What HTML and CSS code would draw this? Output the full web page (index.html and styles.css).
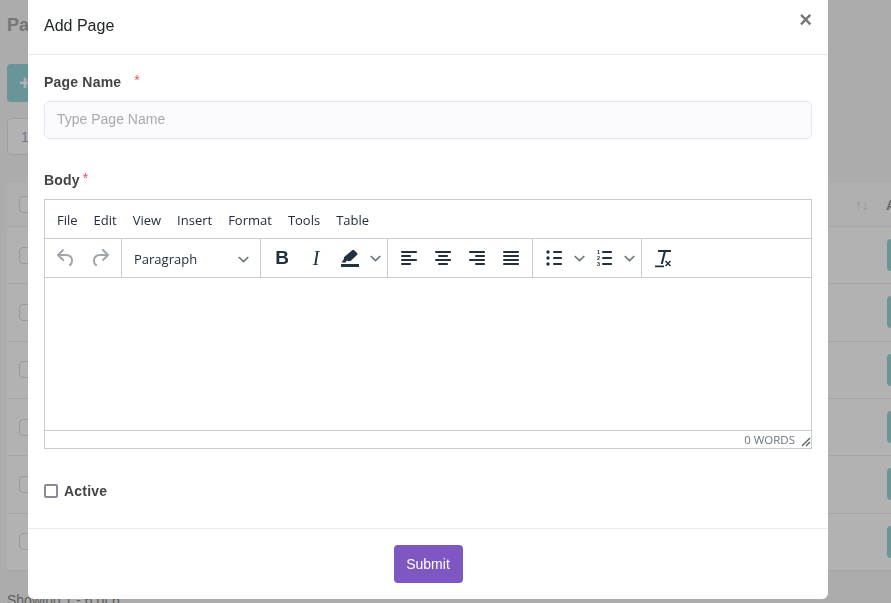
FILE: index.html
```html
<!DOCTYPE html>
<html lang="en">
<head>
    <meta charset="UTF-8">
    <meta name="viewport" content="width=device-width, initial-scale=1.0">
    <title>Add Page</title>
    <link rel="stylesheet" href="styles.css">
</head>
<body>
    <!-- page behind the dialog -->
    <div class="page">
        <h1 class="page-title">Pa</h1>
        <button class="add-btn">+</button>
        <div class="length-box">1</div>
        <div class="table-card">
            <div class="table-head"><span class="check"></span><span class="sort">↑↓</span><span class="head-action">A</span></div>
            <div class="table-row"><span class="check"></span><span class="row-btn"></span></div>
            <div class="table-row"><span class="check"></span><span class="row-btn"></span></div>
            <div class="table-row"><span class="check"></span><span class="row-btn"></span></div>
            <div class="table-row"><span class="check"></span><span class="row-btn"></span></div>
            <div class="table-row"><span class="check"></span><span class="row-btn"></span></div>
            <div class="table-row"><span class="check"></span><span class="row-btn"></span></div>
        </div>
        <p class="showing">Showing 1 - 6 of 6</p>
    </div>
    <div class="backdrop"></div>

    <div class="modal">
        <div class="modal-header">
            <h2 class="modal-title">Add Page</h2>
            <span class="modal-close">×</span>
        </div>
        <form class="modal-body">
            <label class="field-label name-label" for="pageName">Page Name<span class="req req-gap">*</span></label>
            <input class="text-input" type="text" id="pageName" placeholder="Type Page Name">

            <div class="field-label body-label">Body<span class="req">*</span></div>
            <div class="editor">
                <div class="menubar">
                    <span class="menu-item">File</span>
                    <span class="menu-item">Edit</span>
                    <span class="menu-item">View</span>
                    <span class="menu-item">Insert</span>
                    <span class="menu-item">Format</span>
                    <span class="menu-item">Tools</span>
                    <span class="menu-item">Table</span>
                </div>
                <div class="toolbar">
                    <div class="tool-group">
                        <span class="tool disabled"><svg width="24" height="24" viewBox="0 0 24 24"><path d="M6.4 8H12c3.7 0 6.2 2 6.8 5.1.6 2.7-.4 5.6-2.3 6.8a1 1 0 0 1-1-1.8c1.1-.6 1.8-2.7 1.4-4.6-.5-2.1-2.1-3.5-4.9-3.5H6.4l3.3 3.3a1 1 0 1 1-1.4 1.4l-5-5a1 1 0 0 1 0-1.4l5-5a1 1 0 0 1 1.4 1.4L6.4 8z"/></svg></span>
                        <span class="tool disabled"><svg width="24" height="24" viewBox="0 0 24 24"><path d="M17.6 10H12c-2.8 0-4.4 1.4-4.9 3.5-.4 2 .3 4 1.4 4.6a1 1 0 1 1-1 1.8c-2-1.2-2.9-4.1-2.3-6.8.6-3 3-5.1 6.8-5.1h5.6l-3.3-3.3a1 1 0 1 1 1.4-1.4l5 5a1 1 0 0 1 0 1.4l-5 5a1 1 0 0 1-1.4-1.4l3.3-3.3z"/></svg></span>
                    </div>
                    <div class="tool-group">
                        <span class="format-select">Paragraph
                            <svg class="chev" width="11" height="7" viewBox="0 0 11 7"><path d="M.7 1l4.800 4.600L10.300 1" fill="none" stroke-width="1.7"/></svg>
                        </span>
                    </div>
                    <div class="tool-group">
                        <span class="tool tool-bold">B</span>
                        <span class="tool tool-italic">I</span>
                        <span class="tool"><svg width="24" height="24" viewBox="0 0 24 24"><path d="M3 18h18v3H3z"/><path d="M3.500 16.500l2.300-3.300.2-2L14.200 4.300a1.500 1.500 0 0 1 2 0l2.800 2.700a1.500 1.500 0 0 1 0 2.100l-6.500 6-2.300.2-1.300-1-1.200 2.200z"/></svg></span>
                        <span class="tool-arrow"><svg class="chev" width="11" height="7" viewBox="0 0 11 7"><path d="M.7 1l4.800 4.600L10.300 1" fill="none" stroke-width="1.7"/></svg></span>
                    </div>
                    <div class="tool-group">
                        <span class="tool"><svg width="24" height="24" viewBox="0 0 24 24"><path d="M5 5h14c.6 0 1 .4 1 1s-.4 1-1 1H5a1 1 0 1 1 0-2zm0 4h8c.6 0 1 .4 1 1s-.4 1-1 1H5a1 1 0 1 1 0-2zm0 8h8c.6 0 1 .4 1 1s-.4 1-1 1H5a1 1 0 0 1 0-2zm0-4h14c.6 0 1 .4 1 1s-.4 1-1 1H5a1 1 0 0 1 0-2z"/></svg></span>
                        <span class="tool"><svg width="24" height="24" viewBox="0 0 24 24"><path d="M5 5h14c.6 0 1 .4 1 1s-.4 1-1 1H5a1 1 0 1 1 0-2zm3 4h8c.6 0 1 .4 1 1s-.4 1-1 1H8a1 1 0 1 1 0-2zm0 8h8c.6 0 1 .4 1 1s-.4 1-1 1H8a1 1 0 0 1 0-2zm-3-4h14c.6 0 1 .4 1 1s-.4 1-1 1H5a1 1 0 0 1 0-2z"/></svg></span>
                        <span class="tool"><svg width="24" height="24" viewBox="0 0 24 24"><path d="M5 5h14c.6 0 1 .4 1 1s-.4 1-1 1H5a1 1 0 1 1 0-2zm6 4h8c.6 0 1 .4 1 1s-.4 1-1 1h-8a1 1 0 0 1 0-2zm0 8h8c.6 0 1 .4 1 1s-.4 1-1 1h-8a1 1 0 0 1 0-2zm-6-4h14c.6 0 1 .4 1 1s-.4 1-1 1H5a1 1 0 0 1 0-2z"/></svg></span>
                        <span class="tool"><svg width="24" height="24" viewBox="0 0 24 24"><path d="M5 5h14c.6 0 1 .4 1 1s-.4 1-1 1H5a1 1 0 1 1 0-2zm0 4h14c.6 0 1 .4 1 1s-.4 1-1 1H5a1 1 0 1 1 0-2zm0 4h14c.6 0 1 .4 1 1s-.4 1-1 1H5a1 1 0 0 1 0-2zm0 4h14c.6 0 1 .4 1 1s-.4 1-1 1H5a1 1 0 0 1 0-2z"/></svg></span>
                    </div>
                    <div class="tool-group">
                        <span class="tool"><svg width="24" height="24" viewBox="0 0 24 24"><path d="M12 5h7c.6 0 1 .4 1 1s-.4 1-1 1h-7a1 1 0 0 1 0-2zm0 6h7c.6 0 1 .4 1 1s-.4 1-1 1h-7a1 1 0 0 1 0-2zm0 6h7c.6 0 1 .4 1 1s-.4 1-1 1h-7a1 1 0 0 1 0-2z"/><circle cx="6" cy="6" r="1.700"/><circle cx="6" cy="12" r="1.700"/><circle cx="6" cy="18" r="1.700"/></svg></span>
                        <span class="tool-arrow"><svg class="chev" width="11" height="7" viewBox="0 0 11 7"><path d="M.7 1l4.800 4.600L10.300 1" fill="none" stroke-width="1.7"/></svg></span>
                        <span class="tool"><svg width="24" height="24" viewBox="0 0 24 24"><path d="M11 5h8c.6 0 1 .4 1 1s-.4 1-1 1h-8a1 1 0 0 1 0-2zm0 6h8c.6 0 1 .4 1 1s-.4 1-1 1h-8a1 1 0 0 1 0-2zm0 6h8c.6 0 1 .4 1 1s-.4 1-1 1h-8a1 1 0 0 1 0-2z"/><text class="num-text" x="5" y="8">1</text><text class="num-text" x="5" y="14">2</text><text class="num-text" x="5" y="20">3</text></svg></span>
                        <span class="tool-arrow"><svg class="chev" width="11" height="7" viewBox="0 0 11 7"><path d="M.7 1l4.800 4.600L10.300 1" fill="none" stroke-width="1.7"/></svg></span>
                    </div>
                    <div class="tool-group no-border">
                        <span class="tool"><svg width="24" height="24" viewBox="0 0 24 24"><path d="M7 4h13v2h-5.200l-3 12H9.700l3-12H7zM4 19.500h9v1.800H4zM15 14.500l2 2 2-2 1 1-2 2 2 2-1 1-2-2-2 2-1-1 2-2-2-2z"/></svg></span>
                    </div>
                </div>
                <div class="edit-area"></div>
                <div class="statusbar">
                    <span class="word-count">0 WORDS</span>
                    <svg class="resize" width="10" height="10" viewBox="0 0 10 10"><path d="M9 1L1 9M9 5L5 9" fill="none" stroke-width="1.300"/></svg>
                </div>
            </div>

            <label class="active-row"><span class="active-box"></span>Active</label>
        </form>
        <div class="modal-footer">
            <button class="submit-btn" type="button">Submit</button>
        </div>
    </div>
</body>
</html>
```

FILE: styles.css
```css
html, body {
    height: 100%;
}

body {
    margin: 0;
    overflow: hidden;
    font-family: "Liberation Sans", Arial, sans-serif;
    background-color: #f6f6f6;
    color: #333333;
}

/* page behind the dialog */
.page {
    padding: 0 7px;
    height: 603px;
    overflow: hidden;
    box-sizing: border-box;
}

.page-title {
    margin: 0;
    padding-top: 15px;
    height: 64px;
    box-sizing: border-box;
    font-size: 18px;
    color: #aaaaaa;
}

.add-btn {
    display: block;
    width: 120px;
    height: 38px;
    border: none;
    border-radius: 4px;
    background-color: #96d6dd;
    color: #ffffff;
    font-size: 20px;
    font-weight: bold;
    padding-left: 12px;
    text-align: left;
}

.length-box {
    margin-top: 16px;
    width: 60px;
    height: 37px;
    line-height: 37px;
    padding-left: 13px;
    box-sizing: border-box;
    border: 1px solid #e4e4e4;
    border-radius: 4px;
    background-color: #ffffff;
    color: #b9a3e0;
    font-size: 14px;
}

.table-card {
    margin-top: 28px;
    background-color: #ffffff;
    height: 388px;
    margin-right: -27px;
}

.table-head, .table-row {
    display: flex;
    align-items: center;
    justify-content: space-between;
    padding-left: 12px;
    height: 57.33px;
    border-bottom: 1px solid #eeeeee;
    box-sizing: border-box;
}

.table-head {
    height: 44px;
    background-color: #fcfcfc;
}

.check {
    width: 15px;
    height: 15px;
    border: 1px solid #dddddd;
    border-radius: 4px;
    background-color: #ffffff;
}

.sort {
    margin-left: auto;
    margin-right: 17px;
    color: #dddddd;
    font-size: 14px;
}

.head-action {
    width: 25px;
    font-weight: bold;
    font-size: 14px;
    color: #999999;
}

.row-btn {
    width: 24px;
    height: 32px;
    border-radius: 4px;
    background-color: #96d6dd;
}

.showing {
    margin: 21px 0 0;
    font-size: 14px;
    color: #888888;
}

.backdrop {
    position: fixed;
    inset: 0;
    background-color: rgba(0, 0, 0, 0.3);
}

/* dialog */
.modal {
    position: fixed;
    top: 0;
    left: 28px;
    width: 800px;
    background-color: #ffffff;
    border-radius: 0 0 6px 6px;
}

.modal-header {
    position: relative;
    height: 54px;
    border-bottom: 1px solid #e9ecef;
}

.modal-title {
    margin: 0;
    padding: 16px 16px 0;
    font-size: 16px;
    line-height: 20px;
    font-weight: normal;
    color: #212529;
}

.modal-close {
    position: absolute;
    top: 6px;
    right: 16px;
    font-size: 22px;
    line-height: 28px;
    font-weight: bold;
    color: #777777;
}

.modal-body {
    padding: 19px 16px 0;
    height: 473px;
    box-sizing: border-box;
}

.field-label {
    display: block;
    font-size: 14px;
    font-weight: bold;
    line-height: 16px;
    letter-spacing: 0.2px;
    color: #444444;
}

.req {
    position: relative;
    top: -2px;
    margin-left: 3px;
    color: #e8505b;
    font-weight: normal;
}

.req-gap {
    margin-left: 13px;
}

.text-input {
    display: block;
    width: 100%;
    height: 38px;
    margin-top: 11px;
    padding: 0 12px 2px;
    box-sizing: border-box;
    border: 1px solid #e6e3f8;
    border-radius: 5px;
    background-color: #fbfaff;
    font-family: inherit;
    font-size: 14px;
}

.text-input::placeholder {
    color: #aaaaaa;
}

.body-label {
    margin-top: 33px;
}

/* rich text editor */
.editor {
    margin-top: 11px;
    height: 250px;
    box-sizing: border-box;
    border: 1px solid #cccccc;
    display: flex;
    flex-direction: column;
    font-family: "Open Sans", sans-serif;
    color: #222f3e;
}

.menubar {
    display: flex;
    align-items: center;
    height: 36px;
    padding: 2px 0 0 4px;
    border-bottom: 1px solid #cccccc;
    flex: none;
}

.menu-item {
    padding: 0 8px;
    font-size: 13px;
}

.toolbar {
    display: flex;
    height: 38px;
    border-bottom: 1px solid #cccccc;
    flex: none;
}

.tool-group {
    display: flex;
    align-items: center;
    padding: 0 4px;
    border-right: 1px solid #cccccc;
}

.tool-group.no-border {
    border-right: none;
}

.tool {
    display: flex;
    align-items: center;
    justify-content: center;
    width: 34px;
    height: 34px;
    fill: #222f3e;
}

.tool.disabled {
    fill: #a0a5ab;
}

.tool-bold {
    font-family: "Liberation Sans", sans-serif;
    font-size: 19px;
    font-weight: bold;
}

.tool-italic {
    font-family: "Liberation Serif", serif;
    font-size: 20px;
    font-style: italic;
}

.tool-arrow {
    display: flex;
    align-items: center;
    justify-content: center;
    width: 16px;
    height: 34px;
}

.chev {
    stroke: #6c747d;
}

.num-text {
    font-family: "Liberation Sans", sans-serif;
    font-size: 5.5px;
    font-weight: bold;
}

.format-select {
    display: flex;
    align-items: center;
    justify-content: space-between;
    width: 130px;
    height: 34px;
    padding: 2px 7px 0 8px;
    box-sizing: border-box;
    font-size: 13px;
}

.edit-area {
    flex: 1;
}

.statusbar {
    display: flex;
    align-items: center;
    justify-content: flex-end;
    height: 17px;
    flex: none;
    border-top: 1px solid #cccccc;
}

.word-count {
    font-size: 11.5px;
    color: #6b7580;
    margin-right: 6px;
}

.resize {
    stroke: #555e68;
    margin-top: 5px;
}

.active-row {
    display: flex;
    align-items: center;
    gap: 6px;
    margin-top: 34px;
    font-size: 14px;
    font-weight: bold;
    line-height: 16px;
    letter-spacing: 0.2px;
    color: #444444;
}

.active-box {
    width: 10px;
    height: 10px;
    border: 2px solid #8c8a97;
    border-radius: 2px;
}

.modal-footer {
    display: flex;
    justify-content: center;
    padding: 16px 0;
    border-top: 1px solid #e9ecef;
}

.submit-btn {
    width: 69px;
    height: 38px;
    border: none;
    border-radius: 4px;
    background-color: #7e57c2;
    color: #ffffff;
    font-family: inherit;
    font-size: 14px;
}
```
